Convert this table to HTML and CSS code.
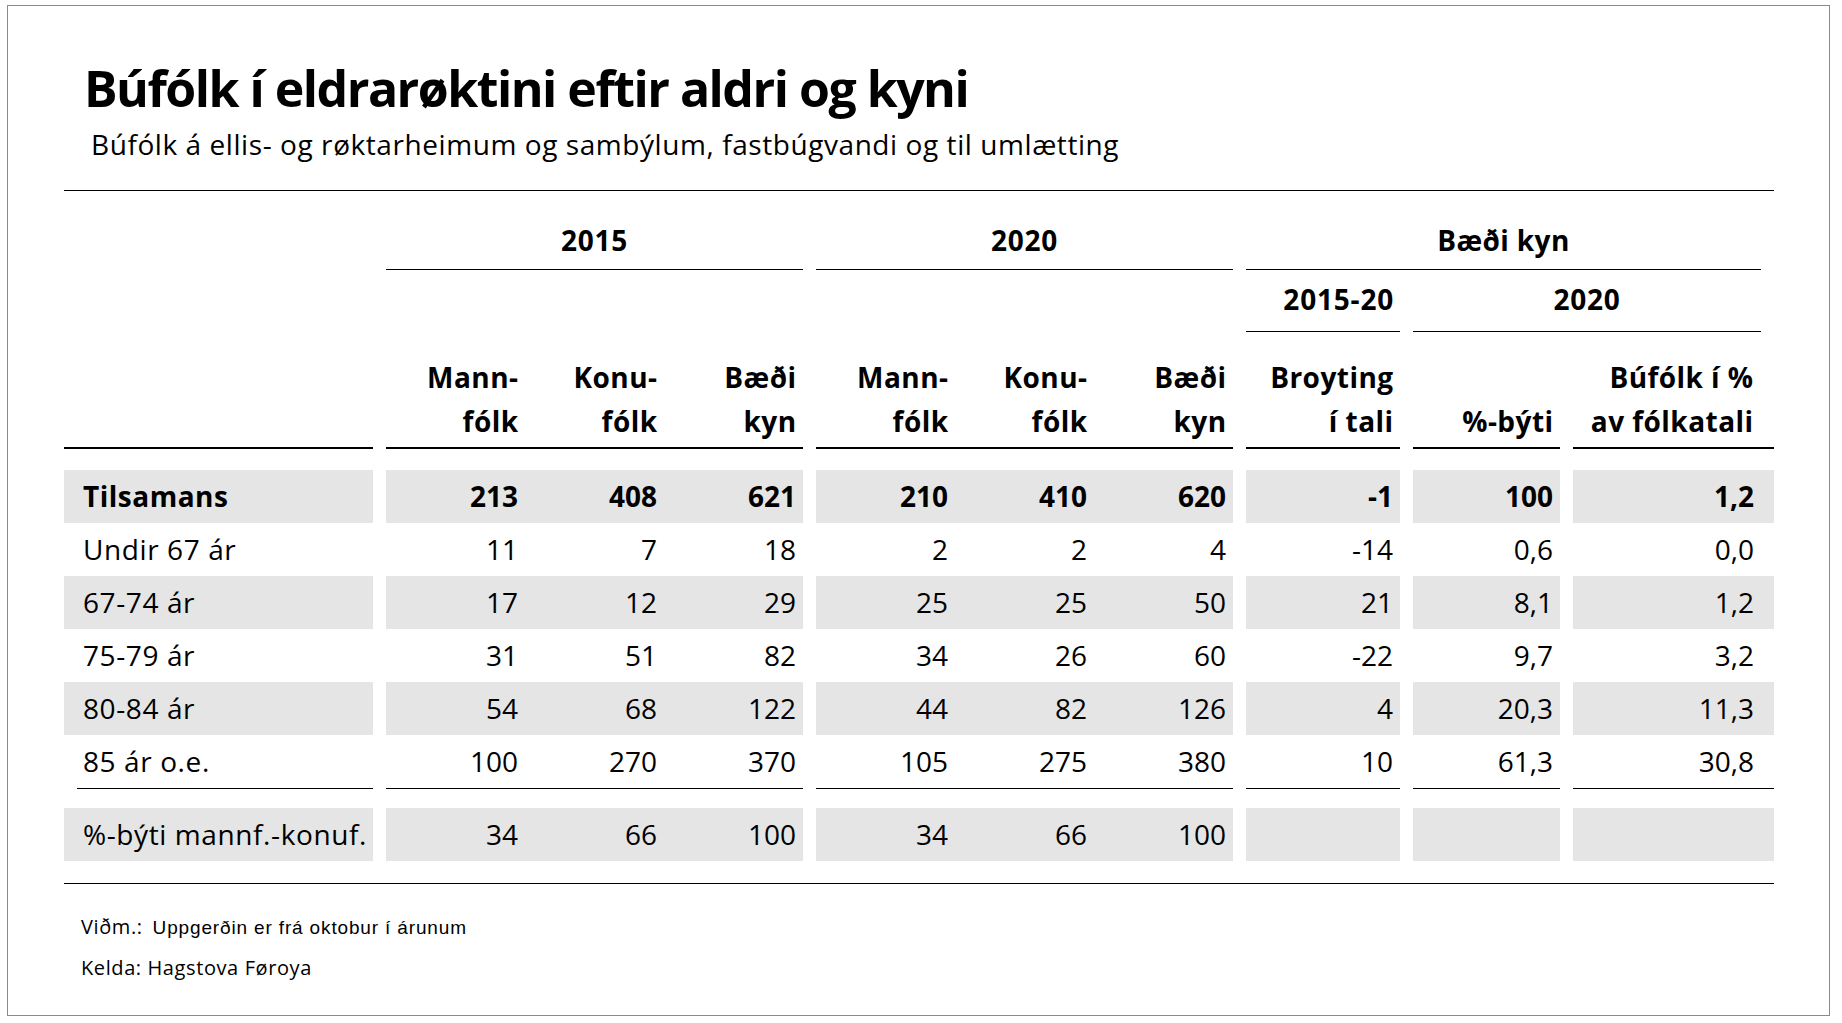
FILE: index.html
```html
<!DOCTYPE html>
<html lang="fo">
<head>
<meta charset="utf-8">
<title>Búfólk í eldrarøktini</title>
<link rel="stylesheet" href="styles.css">
</head>
<body>
<div class="card">
  <h1 class="title">Búfólk í eldrarøktini eftir aldri og kyni</h1>
  <p class="subtitle">Búfólk á ellis- og røktarheimum og sambýlum, fastbúgvandi og til umlætting</p>

  <div class="table">
    <div class="row head-a">
      <div></div>
      <div class="grp">2015</div>
      <div class="grp">2020</div>
      <div class="grp span3">Bæði kyn</div>
    </div>
    <div class="row head-b">
      <div></div>
      <div></div>
      <div></div>
      <div class="grp right">2015-20</div>
      <div class="grp span2">2020</div>
    </div>
    <div class="row head-c">
      <div class="hc"></div>
      <div class="hc trio">
        <div>Mann-<br>fólk</div>
        <div>Konu-<br>fólk</div>
        <div>Bæði<br>kyn</div>
      </div>
      <div class="hc trio">
        <div>Mann-<br>fólk</div>
        <div>Konu-<br>fólk</div>
        <div>Bæði<br>kyn</div>
      </div>
      <div class="hc num">Broyting<br>í tali</div>
      <div class="hc num">%-býti</div>
      <div class="hc num last">Búfólk í %<br>av fólkatali</div>
    </div>

    <div class="body">
      <div class="row data shade bold">
        <div class="lbl">Tilsamans</div>
        <div class="trio"><div>213</div><div>408</div><div>621</div></div>
        <div class="trio"><div>210</div><div>410</div><div>620</div></div>
        <div class="num">-1</div>
        <div class="num">100</div>
        <div class="num last">1,2</div>
      </div>
      <div class="row data">
        <div class="lbl">Undir 67 ár</div>
        <div class="trio"><div>11</div><div>7</div><div>18</div></div>
        <div class="trio"><div>2</div><div>2</div><div>4</div></div>
        <div class="num">-14</div>
        <div class="num">0,6</div>
        <div class="num last">0,0</div>
      </div>
      <div class="row data shade">
        <div class="lbl">67-74 ár</div>
        <div class="trio"><div>17</div><div>12</div><div>29</div></div>
        <div class="trio"><div>25</div><div>25</div><div>50</div></div>
        <div class="num">21</div>
        <div class="num">8,1</div>
        <div class="num last">1,2</div>
      </div>
      <div class="row data">
        <div class="lbl">75-79 ár</div>
        <div class="trio"><div>31</div><div>51</div><div>82</div></div>
        <div class="trio"><div>34</div><div>26</div><div>60</div></div>
        <div class="num">-22</div>
        <div class="num">9,7</div>
        <div class="num last">3,2</div>
      </div>
      <div class="row data shade">
        <div class="lbl">80-84 ár</div>
        <div class="trio"><div>54</div><div>68</div><div>122</div></div>
        <div class="trio"><div>44</div><div>82</div><div>126</div></div>
        <div class="num">4</div>
        <div class="num">20,3</div>
        <div class="num last">11,3</div>
      </div>
      <div class="row data ruled">
        <div class="lbl">85 ár o.e.</div>
        <div class="trio"><div>100</div><div>270</div><div>370</div></div>
        <div class="trio"><div>105</div><div>275</div><div>380</div></div>
        <div class="num">10</div>
        <div class="num">61,3</div>
        <div class="num last">30,8</div>
      </div>
      <div class="row data shade share">
        <div class="lbl">%-býti mannf.-konuf.</div>
        <div class="trio"><div>34</div><div>66</div><div>100</div></div>
        <div class="trio"><div>34</div><div>66</div><div>100</div></div>
        <div class="num"></div>
        <div class="num"></div>
        <div class="num last"></div>
      </div>
    </div>
  </div>

  <div class="notes">
    <p class="note"><span class="note-key">Viðm.:</span><span class="note-arial">Uppgerðin er frá oktobur í árunum</span></p>
    <p class="note">Kelda: Hagstova Føroya</p>
  </div>
</div>
</body>
</html>
```

FILE: styles.css
```css
html, body {
  margin: 0;
  padding: 0;
  background: #fff;
}

body {
  font-family: "Open Sans", "Noto Sans", "DejaVu Sans", sans-serif;
  color: #000;
}

.card {
  box-sizing: border-box;
  margin: 5px 0 0 7px;
  width: 1823px;
  height: 1011px;
  border: 1px solid #8a8a8a;
  padding: 52px 0 0 56px;
}

.title {
  margin: 0 0 0 20px;
  font-size: 50px;
  line-height: 60px;
  font-weight: 700;
  letter-spacing: -1.5px;
}

.subtitle {
  margin: 7px 0 0 27px;
  font-size: 28px;
  line-height: 38px;
  font-weight: 400;
  letter-spacing: 0.57px;
}

.table {
  width: 1710px;
  margin-top: 27px;
  border-top: 1px solid #000;
  border-bottom: 1px solid #000;
  font-size: 28px;
}

.row {
  display: grid;
  grid-template-columns: 309px 417px 417px 154px 147px 201px;
  column-gap: 13px;
}

/* group header row */
.head-a {
  height: 79px;
  font-weight: 700;
  line-height: 38px;
  letter-spacing: 0.7px;
}
.head-a .grp {
  border-bottom: 1px solid #000;
  text-align: center;
  padding-top: 30px;
}
.head-a .span3 {
  grid-column: span 3;
  margin-right: 13px;
  letter-spacing: 0.4px;
}

.head-b {
  height: 62px;
  font-weight: 700;
  line-height: 38px;
  letter-spacing: 0.8px;
}
.head-b .grp {
  border-bottom: 1px solid #000;
  padding-top: 10px;
  text-align: center;
}
.head-b .right {
  text-align: right;
  padding-right: 6px;
}
.head-b .span2 {
  grid-column: span 2;
  margin-right: 13px;
}

.head-c {
  height: 117px;
  font-weight: 700;
  line-height: 44px;
  letter-spacing: 0.45px;
}
.hc {
  border-bottom: 2px solid #000;
  display: flex;
  align-items: flex-end;
  justify-content: flex-end;
  padding-bottom: 4px;
  text-align: right;
}
.hc.trio {
  display: grid;
}

.trio {
  display: grid;
  grid-template-columns: repeat(3, 139px);
}
.trio > div {
  text-align: right;
  padding-right: 7px;
}
.hc.trio > div {
  align-self: end;
  padding-right: 6.5px;
}

.num {
  text-align: right;
  padding-right: 7px;
}
.num.last {
  padding-right: 20px;
}
.hc.num {
  padding-right: 6.5px;
}
.hc.num.last {
  padding-right: 20.5px;
}

.body {
  padding: 21px 0 22px;
}

.data {
  height: 53px;
  line-height: 53px;
}
.data .lbl {
  padding-left: 19px;
  white-space: nowrap;
  letter-spacing: 0.6px;
}
.bold .lbl {
  letter-spacing: 0.5px;
}
.shade > div {
  background: #e5e5e5;
}
.bold {
  font-weight: 700;
}
.ruled {
  height: 54px;
}
.ruled > div {
  border-bottom: 1px solid #000;
}
.ruled > .lbl {
  margin-left: 13px;
  padding-left: 6px;
}
.share {
  margin-top: 19px;
}

.notes {
  margin: 23px 0 0 17px;
}
.note {
  margin: 0;
  font-size: 20px;
  line-height: 40px;
  letter-spacing: 0.6px;
}
.note-key {
  margin-right: 10px;
}
.note-arial {
  font-family: "Liberation Sans", Arial, sans-serif;
  font-size: 19px;
  letter-spacing: 0.85px;
}
```
